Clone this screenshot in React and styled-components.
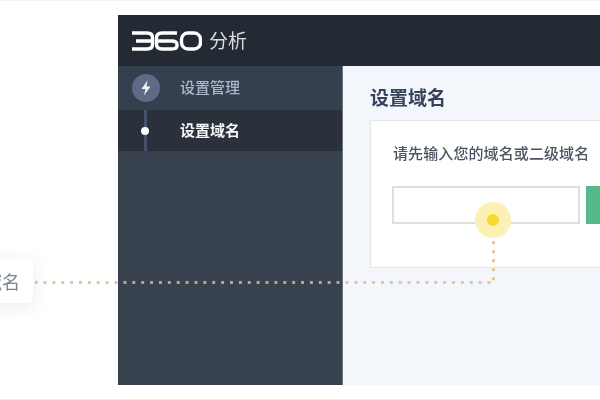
import React from 'react';
import styled, { createGlobalStyle } from 'styled-components';

const GlobalStyle = createGlobalStyle`
  html, body {
    margin: 0;
    padding: 0;
    background: #fff;
  }
`;

const Page = styled.div`
  position: relative;
  width: 600px;
  height: 400px;
  box-sizing: border-box;
  padding: 15px 0 15px 118px;
  overflow: hidden;
  background: #fff;
  font-family: "Noto Sans CJK SC", "Liberation Sans", sans-serif;
  display: flex;
  filter: blur(0.35px);
  box-shadow: inset 0 1px 0 #eef2f7, inset 0 -1px 0 #e9eef4;
`;

const AppWindow = styled.div`
  flex: 1;
  min-width: 0;
  display: flex;
  flex-direction: column;
  background: #38414e;
`;

const Header = styled.header`
  height: 51px;
  flex: none;
  background: #242a33;
  display: flex;
  align-items: center;
  padding-left: 13px;
  gap: 7px;
`;

const Brand = styled.span`
  color: #d9dde2;
  font-size: 19px;
  line-height: 1;
  margin-top: -2px;
`;

const Body = styled.div`
  flex: 1;
  min-height: 0;
  display: flex;
`;

const Sidebar = styled.nav`
  width: 224px;
  flex: none;
  background: #38414e;
  border-right: 1px solid #6d7480;
`;

const MenuRow = styled.div`
  height: 44px;
  box-sizing: border-box;
  padding: 0 0 3px 14px;
  display: flex;
  align-items: center;
  background: #353f4e;
  color: #aab8cb;
  font-size: 15px;
  font-weight: 500;
`;

const Badge = styled.div`
  width: 28px;
  height: 28px;
  border-radius: 50%;
  background: #5f6a87;
  display: flex;
  align-items: center;
  justify-content: center;
  margin: 3px 20px 0 0;
`;

const SubRow = styled.div`
  height: 41px;
  display: flex;
  align-items: center;
  background: #2a313b;
  color: #f4f6f8;
  font-size: 15px;
  font-weight: 700;
`;

const Track = styled.div`
  width: 54px;
  height: 100%;
  flex: none;
  margin-right: 8px;
  display: flex;
  justify-content: center;
  align-items: center;
  background: linear-gradient(#46526a, #46526a) center / 3px 100% no-repeat;
`;

const SubLabel = styled.span`
  margin-top: -3px;
`;

const Dot = styled.span`
  width: 8px;
  height: 8px;
  border-radius: 50%;
  background: #fff;
`;

const Content = styled.main`
  flex: 1;
  min-width: 0;
  background: #f3f6fa;
  padding: 18px 0 0 27px;
  overflow: hidden;
`;

const Title = styled.h2`
  margin: 0 0 10px;
  font-size: 19px;
  line-height: 26px;
  font-weight: 700;
  color: #36425a;
`;

const Card = styled.section`
  width: 300px;
  height: 148px;
  box-sizing: border-box;
  background: #fff;
  border: 1px solid #e6e6e6;
  padding: 21px 21px;
`;

const Label = styled.p`
  margin: 0 0 22px;
  padding-left: 1px;
  font-size: 15px;
  line-height: 22px;
  font-weight: 500;
  letter-spacing: 0.1px;
  color: #4a5464;
  white-space: nowrap;
`;

const FormRow = styled.div`
  display: flex;
  gap: 6px;
`;

const DomainInput = styled.div`
  width: 188px;
  height: 38px;
  box-sizing: border-box;
  flex: none;
  background: #fff;
  border: 2px solid #dfdfdf;
`;

const SubmitButton = styled.div`
  width: 60px;
  height: 38px;
  flex: none;
  background: #55b98a;
`;

const Pulse = styled.div`
  position: absolute;
  left: 475px;
  top: 202px;
  width: 36px;
  height: 36px;
  border-radius: 50%;
  background: #fcf0b4;
  display: flex;
  align-items: center;
  justify-content: center;
`;

const PulseCore = styled.span`
  width: 12px;
  height: 12px;
  border-radius: 50%;
  background: #f9d82e;
`;

const Callout = styled.div`
  position: absolute;
  left: -27px;
  top: 259px;
  width: 60px;
  height: 44px;
  box-sizing: border-box;
  padding-right: 13px;
  border-radius: 6px;
  background: #fff;
  box-shadow: 0 3px 18px rgba(40, 50, 70, 0.1);
  color: #77859a;
  font-size: 18px;
  display: flex;
  align-items: center;
  justify-content: flex-end;
  white-space: nowrap;
`;

const Connector = styled.svg`
  position: absolute;
  left: 0;
  top: 0;
  pointer-events: none;
`;

function Logo() {
  return (
    <svg width="71" height="20" viewBox="0 0 71 20" fill="none" stroke="#fff" strokeWidth="3.4">
      <path d="M1 2 H16 Q21.5 2 21.5 6.5 V13.5 Q21.5 18 16 18 H1 M5 10 H21" />
      <path d="M46 2 H31 Q25.5 2 25.5 7 V13 Q25.5 18 31 18 H41 Q46 18 46 14.5 V13.5 Q46 10 41 10 H26" />
      <rect x="50.5" y="2" width="19" height="16" rx="6.5" />
    </svg>
  );
}

function Bolt() {
  return (
    <svg width="12" height="16" viewBox="0 0 12 16">
      <path d="M7.5 0.5 L1.5 9 H5.5 L4 15.5 L10.5 6.5 H6.5 Z" fill="#f2f4f7" />
    </svg>
  );
}

export default function App() {
  return (
    <>
      <GlobalStyle />
      <Page>
        <AppWindow>
          <Header>
            <Logo />
            <Brand>分析</Brand>
          </Header>
          <Body>
            <Sidebar>
              <MenuRow>
                <Badge>
                  <Bolt />
                </Badge>
                设置管理
              </MenuRow>
              <SubRow>
                <Track>
                  <Dot />
                </Track>
                <SubLabel>设置域名</SubLabel>
              </SubRow>
            </Sidebar>
            <Content>
              <Title>设置域名</Title>
              <Card>
                <Label>请先输入您的域名或二级域名</Label>
                <FormRow>
                  <DomainInput />
                  <SubmitButton />
                </FormRow>
              </Card>
            </Content>
          </Body>
        </AppWindow>
        <Connector width="600" height="400" fill="none" stroke="#e8c596" strokeWidth="3">
          <path d="M493.5 241.2 V281" strokeDasharray="3 6" />
          <path d="M490.5 282.5 H345" strokeDasharray="3 5.88" />
          <path d="M339.54 282.5 H123" strokeDasharray="3 5.88" stroke="#c4a27a" />
          <path d="M117.5 282.5 H35" strokeDasharray="3 5.88" />
        </Connector>
        <Pulse>
          <PulseCore />
        </Pulse>
        <Callout>设置域名</Callout>
      </Page>
    </>
  );
}
